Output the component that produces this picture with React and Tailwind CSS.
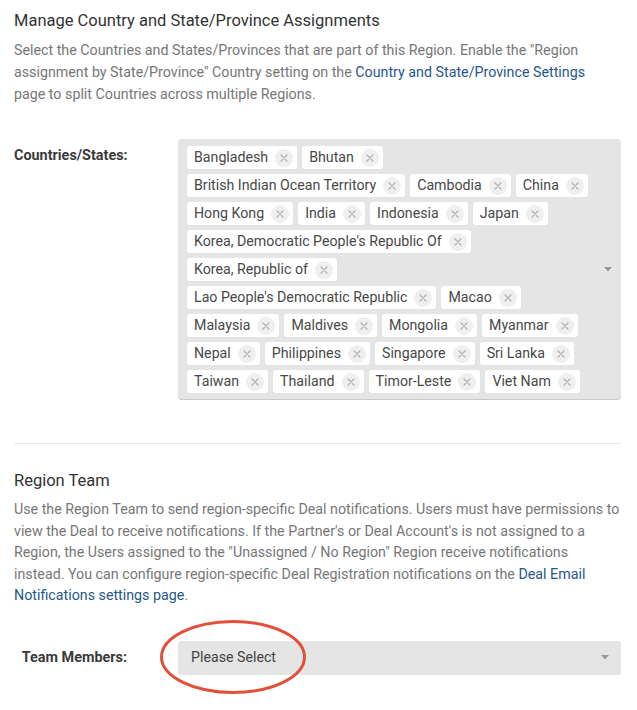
import React from "react";

const rows = [
  ["Bangladesh", "Bhutan"],
  ["British Indian Ocean Territory", "Cambodia", "China"],
  ["Hong Kong", "India", "Indonesia", "Japan"],
  ["Korea, Democratic People's Republic Of"],
  ["Korea, Republic of"],
  ["Lao People's Democratic Republic", "Macao"],
  ["Malaysia", "Maldives", "Mongolia", "Myanmar"],
  ["Nepal", "Philippines", "Singapore", "Sri Lanka"],
  ["Taiwan", "Thailand", "Timor-Leste", "Viet Nam"],
];

function Tag({ label }) {
  return (
    <div className="flex h-[23px] items-center rounded-[3px] bg-white pl-[7px] pr-[4px] text-[14.2px] text-[#484848]">
      <span className="whitespace-nowrap">{label}</span>
      <span className="ml-[7px] flex h-[18px] w-[18px] items-center justify-center rounded-full bg-[#efefef]">
        <svg width="8" height="8" viewBox="0 0 8 8">
          <path d="M1 1L7 7M7 1L1 7" stroke="#b3b3b3" strokeWidth="1.3" strokeLinecap="round" />
        </svg>
      </span>
    </div>
  );
}

function Caret() {
  return (
    <svg width="8" height="5" viewBox="0 0 8 5" className="shrink-0">
      <path d="M0 0H8L4 4.5Z" fill="#9a9a9a" />
    </svg>
  );
}

export default function App() {
  return (
    <div
      className="relative w-[637px] bg-white pl-[14px] pr-[16px] pt-[9px] pb-[35px] text-[#333]"
      style={{ fontFamily: "Roboto, 'Liberation Sans', sans-serif" }}
    >
      <h2 className="text-[16.5px] leading-[24px] text-[#333]">
        Manage Country and State/Province Assignments
      </h2>
      <p className="mt-[6px] text-[14.25px] leading-[22px] text-[#777]">
        Select the Countries and States/Provinces that are part of this Region. Enable the "Region
        assignment by State/Province" Country setting on the{" "}
        <a className="text-[#1f5888]">Country and State/Province Settings</a>
        <br />
        page to split Countries across multiple Regions.
      </p>

      <div className="mt-[34px] flex">
        <div className="w-[113px] shrink-0 whitespace-nowrap pt-[7px] text-right text-[14.4px] font-bold leading-[20px] text-[#3a3a3a]">
          Countries/States:
        </div>
        <div className="ml-[51px] flex flex-1 items-center rounded-[4px] bg-[#e5e5e5] pb-[6px] pl-[9px] pr-[9px] pt-[7px] shadow-[0_1px_0_#c9c9c9]">
          <div className="flex flex-1 flex-col gap-[5px]">
            {rows.map((r, i) => (
              <div key={i} className="flex gap-[5px]">
                {r.map((t) => (
                  <Tag key={t} label={t} />
                ))}
              </div>
            ))}
          </div>
          <Caret />
        </div>
      </div>

      <div className="mt-[44px] border-t border-[#e6e6e6]" />

      <h2 className="mt-[25px] text-[16.5px] leading-[24px] text-[#333]">Region Team</h2>
      <p className="mt-[6px] text-[14.25px] leading-[21.5px] text-[#777]">
        Use the Region Team to send region-specific Deal notifications. Users must have permissions to
        view the Deal to receive notifications. If the Partner's or Deal Account's is not assigned to a
        Region, the Users assigned to the "Unassigned / No Region" Region receive notifications
        instead. You can configure region-specific Deal Registration notifications on the{" "}
        <a className="text-[#1f5888]">Deal Email Notifications settings page</a>.
      </p>

      <div className="mt-[34px] flex items-center">
        <div className="w-[113px] shrink-0 whitespace-nowrap text-right text-[14.4px] font-bold leading-[20px] text-[#3a3a3a]">
          Team Members:
        </div>
        <div className="relative ml-[51px] flex h-[34px] flex-1 items-center rounded-[3px] bg-[#e5e5e5] pl-[13px] pr-[12px]">
          <span className="flex-1 text-[14.2px] text-[#444]">Please Select</span>
          <Caret />
          <svg
            className="pointer-events-none absolute left-[-19px] top-[-22px]"
            width="148"
            height="76"
            viewBox="0 0 148 76"
          >
            <ellipse cx="74" cy="38" rx="71.5" ry="35.5" fill="none" stroke="#e0503a" strokeWidth="3" />
          </svg>
        </div>
      </div>
    </div>
  );
}
